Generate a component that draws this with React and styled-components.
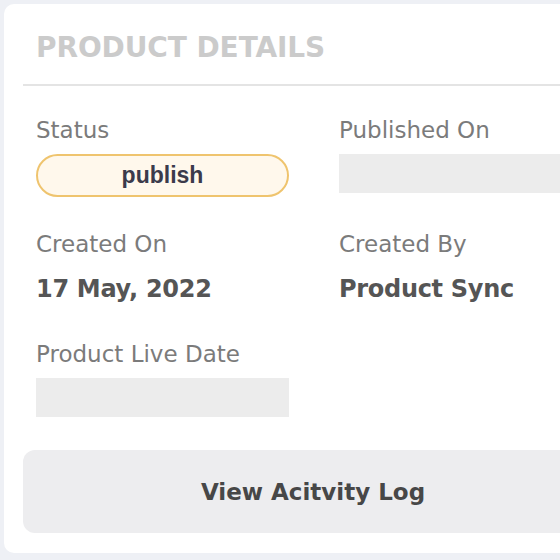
import React from 'react';
import styled, { createGlobalStyle } from 'styled-components';

const GlobalStyle = createGlobalStyle`
    body {
        margin: 0;
        background: #eef0f5;
        overflow: hidden;
        font-family: "DejaVu Sans", "Noto Sans", sans-serif;
    }
`;

const Page = styled.div`
    padding: 4px;
    width: 640px;
`;

const Card = styled.section`
    width: 618px;
    box-sizing: border-box;
    background: #fff;
    border-radius: 10px;
    padding: 0 19px 20px;
`;

const Header = styled.div`
    padding: 26px 13px 19px;
    border-bottom: 2px solid #e4e4e4;
`;

const Title = styled.h2`
    margin: 0;
    font-size: 28px;
    line-height: 35px;
    font-weight: 700;
    color: #cbcbcb;
    letter-spacing: -0.1px;
`;

const Body = styled.div`
    padding: 30px 13px 0;
`;

const Grid = styled.div`
    display: grid;
    grid-template-columns: 303px 303px;
    row-gap: 33px;
`;

const Field = styled.div`
    display: flex;
    flex-direction: column;
    gap: 10px;
`;

const Label = styled.span`
    font-size: 23px;
    line-height: 28px;
    color: #7b7b7b;
`;

const Value = styled.span`
    margin-top: 3px;
    font-size: 24px;
    line-height: 36px;
    font-weight: 700;
    color: #555;
    letter-spacing: -0.3px;
`;

const Empty = styled.div`
    width: 253px;
    height: 39px;
    background: #ececec;
`;

const Badge = styled.div`
    width: 253px;
    height: 43px;
    box-sizing: border-box;
    border: 2px solid #efc46e;
    background: #fff8ec;
    border-radius: 22px;
    display: flex;
    align-items: center;
    justify-content: center;
    font-family: "Liberation Sans", Arial, sans-serif;
    font-weight: 700;
    font-size: 23px;
    color: #3b3b4b;
`;

const LogButton = styled.button`
    display: block;
    margin-top: 33px;
    width: 100%;
    height: 83px;
    border: none;
    border-radius: 12px;
    background: #ededef;
    font-family: inherit;
    font-size: 23px;
    font-weight: 700;
    color: #474747;
    cursor: pointer;
`;

export default function App() {
    return (
        <>
            <GlobalStyle />
            <Page>
                <Card>
                    <Header>
                        <Title>PRODUCT DETAILS</Title>
                    </Header>
                    <Body>
                        <Grid>
                            <Field>
                                <Label>Status</Label>
                                <Badge>publish</Badge>
                            </Field>
                            <Field>
                                <Label>Published On</Label>
                                <Empty />
                            </Field>
                            <Field>
                                <Label>Created On</Label>
                                <Value>17 May, 2022</Value>
                            </Field>
                            <Field>
                                <Label>Created By</Label>
                                <Value>Product Sync</Value>
                            </Field>
                            <Field>
                                <Label>Product Live Date</Label>
                                <Empty />
                            </Field>
                        </Grid>
                    </Body>
                    <LogButton>View Acitvity Log</LogButton>
                </Card>
            </Page>
        </>
    );
}
